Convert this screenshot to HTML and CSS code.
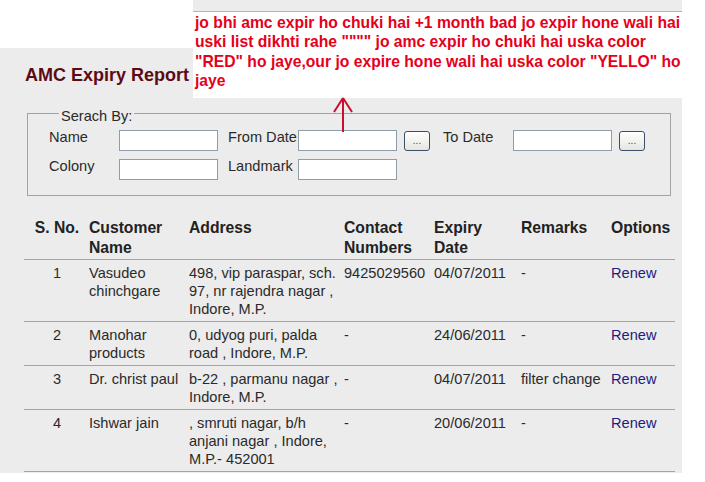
FILE: index.html
```html
<!DOCTYPE html>
<html>
<head>
<meta charset="utf-8">
<title>AMC Expiry Report</title>
<link rel="stylesheet" href="styles.css">
</head>
<body>
<div class="panel">
  <h1 class="title">AMC Expiry Report</h1>
  <fieldset class="search">
    <legend>Serach By:</legend>
    <div class="form-grid">
      <label>Name</label><input type="text" class="txt">
      <label>From Date</label><input type="text" class="txt"><button class="pick">...</button>
      <label>To Date</label><input type="text" class="txt"><button class="pick">...</button>
      <label>Colony</label><input type="text" class="txt">
      <label>Landmark</label><input type="text" class="txt">
    </div>
  </fieldset>
  <table class="report">
    <colgroup>
      <col class="c1"><col class="c2"><col class="c3"><col class="c4"><col class="c5"><col class="c6"><col class="c7">
    </colgroup>
    <thead>
      <tr><th class="sno">S. No.</th><th>Customer Name</th><th>Address</th><th>Contact Numbers</th><th>Expiry Date</th><th>Remarks</th><th>Options</th></tr>
    </thead>
    <tbody>
      <tr><td class="sno">1</td><td>Vasudeo chinchgare</td><td>498, vip paraspar, sch. 97, nr rajendra nagar , Indore, M.P.</td><td>9425029560</td><td>04/07/2011</td><td>-</td><td><a href="#">Renew</a></td></tr>
      <tr><td class="sno">2</td><td>Manohar products</td><td>0, udyog puri, palda road , Indore, M.P.</td><td>-</td><td>24/06/2011</td><td>-</td><td><a href="#">Renew</a></td></tr>
      <tr><td class="sno">3</td><td>Dr. christ paul</td><td>b-22 , parmanu nagar , Indore, M.P.</td><td>-</td><td>04/07/2011</td><td>filter change</td><td><a href="#">Renew</a></td></tr>
      <tr><td class="sno">4</td><td>Ishwar jain</td><td>, smruti nagar, b/h anjani nagar , Indore, M.P.- 452001</td><td>-</td><td>20/06/2011</td><td>-</td><td><a href="#">Renew</a></td></tr>
    </tbody>
  </table>
</div>
<div class="top-strip"></div>
<div class="note">jo bhi amc expir ho chuki hai +1 month bad jo expir hone wali hai<br>uski list dikhti rahe """" jo amc expir ho chuki hai uska color<br>"RED" ho jaye,our jo expire hone wali hai uska color "YELLO" ho<br>jaye</div>
<svg class="arrow" width="22" height="38" viewBox="0 0 22 38">
  <path d="M11 2 L11 36 M11 2 L2 16 M11 2 L20 16" fill="none" stroke="#c8102e" stroke-width="2"/>
</svg>
</body>
</html>
```
FILE: styles.css
```css
html, body {
  margin: 0;
  padding: 0;
  background: #ffffff;
}
body {
  font-family: "Liberation Sans", Arial, sans-serif;
  color: #2a2a2a;
  position: relative;
  width: 705px;
  height: 482px;
  overflow: hidden;
}
.panel {
  margin-top: 48px;
  width: 682px;
  background: #ececec;
  padding-top: 17px;
  padding-bottom: 1px;
}
.title {
  margin: 0 0 0 25px;
  font-size: 18px;
  line-height: 20px;
  font-weight: bold;
  color: #5c0a14;
}
.search {
  margin: 17px 0 0 27px;
  width: 644px;
  box-sizing: border-box;
  border: 1px solid #a2a2a2;
  padding: 5px 0 15px 21px;
  min-width: 0;
}
.search legend {
  padding: 6px 2px 0 2px;
  margin-left: 10px;
  font-size: 14.6px;
  line-height: 17px;
  color: #2a2a2a;
}
.form-grid {
  display: grid;
  grid-template-columns: 70px 109px 70px 106px 39px 70px 106px 26px;
  grid-auto-rows: 21px;
  row-gap: 8px;
  align-items: start;
}
.form-grid label {
  font-size: 14.6px;
  line-height: 17px;
  margin-top: -1px;
  white-space: nowrap;
}
.txt {
  width: 99px;
  height: 21px;
  box-sizing: border-box;
  border: 1px solid #8e9cab;
  background: #ffffff;
  margin: 0;
  padding: 0;
}
.pick {
  width: 26px;
  height: 20px;
  margin: 1px 0 0 0;
  padding: 0;
  box-sizing: border-box;
  border: 1px solid #3b5068;
  border-radius: 3px;
  background: linear-gradient(#ffffff, #e6e6e0);
  font-family: "Liberation Sans", Arial, sans-serif;
  font-size: 10px;
  line-height: 12px;
  color: #444;
}
.report {
  margin: 20px 0 0 24px;
  width: 651px;
  table-layout: fixed;
  border-collapse: collapse;
}
.c1 { width: 61px; }
.c2 { width: 100px; }
.c3 { width: 155px; }
.c4 { width: 90px; }
.c5 { width: 87px; }
.c6 { width: 90px; }
.c7 { width: 68px; }
.report th {
  font-size: 15.7px;
  line-height: 20px;
  font-weight: bold;
  text-align: left;
  vertical-align: top;
  color: #222;
  padding: 2px 1px 1px 4px;
  border-bottom: 1px solid #c59c74;
}
.report td {
  font-size: 14.6px;
  line-height: 18px;
  vertical-align: top;
  padding: 4px 1px 3px 4px;
  border-bottom: 1px solid #c59c74;
  color: #2a2a2a;
}
.report .sno {
  text-align: center;
  padding-left: 5px;
  padding-right: 0;
}
.report a {
  color: #1e2080;
  text-decoration: none;
}
.top-strip {
  position: absolute;
  left: 193px;
  top: 0;
  width: 489px;
  height: 11px;
  background: #ececec;
  border-bottom: 1px solid #b4b4b4;
}
.note {
  position: absolute;
  left: 193px;
  top: 12px;
  width: 487px;
  height: 85px;
  padding: 1px 0 0 2px;
  background: #ffffff;
  color: #e6001a;
  font-weight: bold;
  font-size: 15.7px;
  line-height: 19.3px;
  white-space: nowrap;
}
.arrow {
  position: absolute;
  left: 332px;
  top: 96px;
}
```
